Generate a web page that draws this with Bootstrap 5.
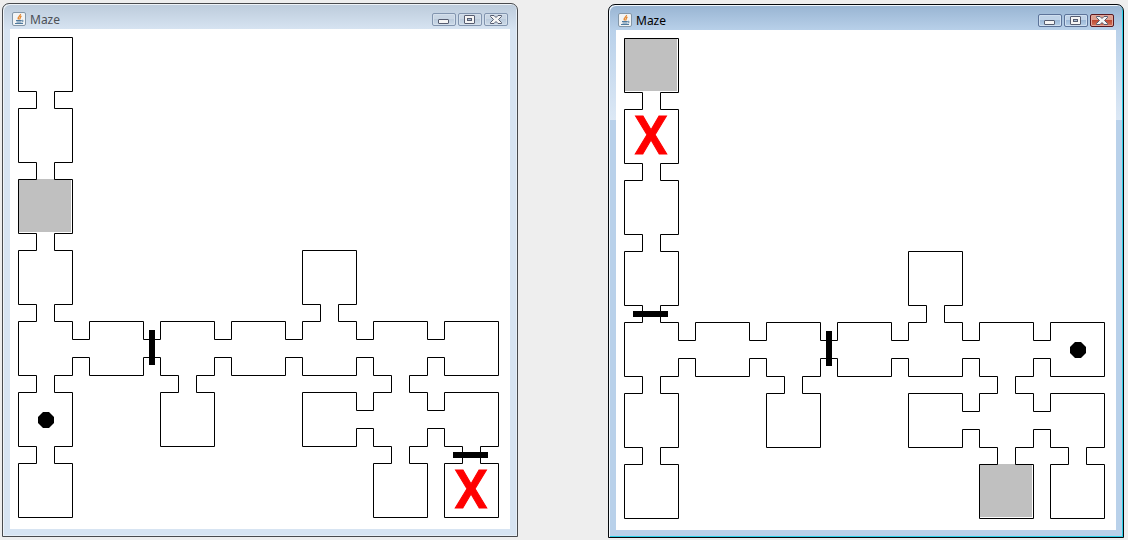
<!DOCTYPE html>
<html lang="en">
<head>
<meta charset="utf-8">
<meta name="viewport" content="width=device-width, initial-scale=1">
<title>Maze</title>
<link href="https://cdn.jsdelivr.net/npm/bootstrap@5.3.0/dist/css/bootstrap.min.css" rel="stylesheet">
<style>
  body { background: #eee; font-family: "Noto Sans", "Open Sans", sans-serif; }
  .desktop { gap: 90px; padding: 3px 4px 0 2px; }
  .win {
    flex: 1 1 0; min-width: 0;
    border: 1px solid #484a4d;
    border-radius: 7px 7px 0 0;
    padding: 0 7px 7px;
    background: linear-gradient(#bccbdb, #d7e4f2 26px);
    box-shadow: inset 1px 1px #eef3f8, inset -1px -1px #e6eef6;
    color: #4c5056;
  }
  .win-active {
    margin-top: 1px;
    border-color: #05080c;
    background:
      linear-gradient(#98b4d2, #b9d1ea 26px, #dce8f5 115px, #b9d1ea 115px);
    box-shadow: inset 1px 1px #f2f8fd, inset -1px -1px #2ad0e8;
    color: #000;
  }
  .titlebar { height: 25px; padding: 8px 2px 0; gap: 4px; }
  .titlebar h1 { font-size: 12px; line-height: 16px; font-weight: 400; }
  .controls { gap: 2px; margin-top: 1px; }
  .ctl {
    width: 24px; height: 13px; padding: 0;
    border: 1px solid #8295af; border-radius: 2px;
    background: linear-gradient(#c9d6e4 45%, #bbcbdc 50%, #cddbe9);
    box-shadow: inset 0 0 0 1px #d5e0ec;
  }
  .win-active .ctl {
    border-color: #5c7399;
    background: linear-gradient(#c0d3e8 45%, #9db9d8 50%, #b7d0e9);
    box-shadow: inset 0 0 0 1px #cfdff0;
  }
  .win-active .ctl-close {
    border-color: #5a1920;
    background: linear-gradient(#dda08f 45%, #bf4a34 50%, #d2775c);
    box-shadow: inset 0 0 0 1px #e3a79b;
  }
  .ctl svg { display: block; width: 22px; height: 11px; }
  .board { display: block; width: 100%; height: auto; background: #fff; }
  .mark-x { font: 500 53px Roboto, "Liberation Sans", sans-serif; fill: #f00; stroke: #f00; stroke-width: 1px; }
</style>
</head>
<body>
<svg class="d-none" aria-hidden="true">
  <!-- Java cup -->
  <symbol id="java" viewBox="0 0 14 14">
    <rect x=".5" y=".5" width="13" height="13" rx="1.5" fill="#f2f4f5" stroke="#8497a8"/>
    <path d="M8.500 2C9 4 5 4.500 6.500 7.500M9.500 4.200C7.500 5 8.800 6 7.500 7.500" fill="none" stroke="#e58a35" stroke-width="1.300"/>
    <path d="M4 8.500h5.500M4.500 10h4.500M9.500 8.500c2.500-.8 2 1.500 0 1.500M3 11.500h8" fill="none" stroke="#4f7a9e" stroke-width="1"/>
  </symbol>
  <symbol id="min" viewBox="0 0 22 11">
    <rect x="5.500" y="5.500" width="10" height="4" rx=".5" fill="#f5f5f5" stroke="#555c70"/>
  </symbol>
  <symbol id="max" viewBox="0 0 22 11">
    <rect x="5.500" y="1.500" width="10" height="8" rx=".5" fill="#f5f5f5" stroke="#555c70"/>
    <rect x="8.500" y="4.500" width="4" height="2" fill="#a9bdd4" stroke="#555c70"/>
  </symbol>
  <symbol id="close" viewBox="0 0 22 11">
    <path d="M5.500 1.500h3.500l2 2 2-2h3.500v1l-3 3 3 3v1h-3.500l-2-2-2 2h-3.500v-1l3-3-3-3z" fill="#f5f5f5" stroke="#555c70" stroke-linejoin="round"/>
  </symbol>
  <!-- Rooms are 54 wide on a pitch of 71; doorways are 18 wide -->
  <symbol id="walls" viewBox="0 0 500 500">
    <path fill="none" stroke="#000" d="M8.500 8.500
      h54 v54 h-18v17h18 v54 h-18v17h18 v54 h-18v17h18 v54 h-18v17h18
      v18h17v-18 h54 v18h17v-18 h54 v18h17v-18 h54 v18h17v-18
      h18v-17h-18 v-54h54v54 h-18v17h18
      v18h17v-18 h54 v18h17v-18 h54 v54 h-54 v-18h-17v18
      h-18v17h18 v18h17v-18 h54 v54 h-18v17h18 v54h-54v-54 h18v-17h-18
      v-18h-17v18 h-18v17h18 v54h-54v-54 h18v-17h-18
      v-18h-17v18 h-54v-54h54 v18h17v-18 h18v-17h-18
      v-18h-17v18 h-54 v-18h-17v18 h-54 v-18h-17v18
      h-18v17h18 v54h-54v-54 h18v-17h-18
      v-18h-17v18 h-54 v-18h-17v18
      h-18v17h18 v54 h-18v17h18 v54h-54v-54
      h18v-17h-18 v-54 h18v-17h-18 v-54 h18v-17h-18 v-54 h18v-17h-18 v-54 h18v-17h-18 v-54 h18v-17h-18 z"/>
  </symbol>
</svg>

<main class="desktop d-flex align-items-start">
  <section class="win" aria-label="Maze, inactive window">
    <header class="titlebar d-flex align-items-start">
      <svg width="14" height="14" class="flex-shrink-0" aria-hidden="true"><use href="#java"/></svg>
      <h1 class="mb-0 me-auto">Maze</h1>
      <div class="controls d-flex">
        <button type="button" class="ctl" aria-label="Minimize"><svg><use href="#min"/></svg></button>
        <button type="button" class="ctl" aria-label="Maximize"><svg><use href="#max"/></svg></button>
        <button type="button" class="ctl ctl-close" aria-label="Close"><svg><use href="#close"/></svg></button>
      </div>
    </header>
    <svg class="board" viewBox="0 0 500 500">
      <rect x="8" y="150" width="53" height="53" fill="#c0c0c0"/>
      <use href="#walls" width="500" height="500"/>
      <rect x="139" y="301" width="6" height="35"/>
      <rect x="443" y="423" width="35" height="6"/>
      <path d="M33 383h6l5 5v6l-5 5h-6l-5-5v-6z"/>
      <text class="mark-x" x="461" y="479" text-anchor="middle">X</text>
    </svg>
  </section>

  <section class="win win-active" aria-label="Maze, active window">
    <header class="titlebar d-flex align-items-start">
      <svg width="14" height="14" class="flex-shrink-0" aria-hidden="true"><use href="#java"/></svg>
      <h1 class="mb-0 me-auto">Maze</h1>
      <div class="controls d-flex">
        <button type="button" class="ctl" aria-label="Minimize"><svg><use href="#min"/></svg></button>
        <button type="button" class="ctl" aria-label="Maximize"><svg><use href="#max"/></svg></button>
        <button type="button" class="ctl ctl-close" aria-label="Close"><svg><use href="#close"/></svg></button>
      </div>
    </header>
    <svg class="board" viewBox="0 0 500 500">
      <rect x="8" y="8" width="53" height="53" fill="#c0c0c0"/>
      <rect x="363" y="434" width="53" height="53" fill="#c0c0c0"/>
      <use href="#walls" width="500" height="500"/>
      <rect x="17" y="281" width="35" height="6"/>
      <rect x="210" y="301" width="6" height="35"/>
      <path d="M459 312h6l5 5v6l-5 5h-6l-5-5v-6z"/>
      <text class="mark-x" x="35" y="124" text-anchor="middle">X</text>
    </svg>
  </section>
</main>
<script src="https://cdn.jsdelivr.net/npm/bootstrap@5.3.0/dist/js/bootstrap.bundle.min.js"></script>
</body>
</html>
